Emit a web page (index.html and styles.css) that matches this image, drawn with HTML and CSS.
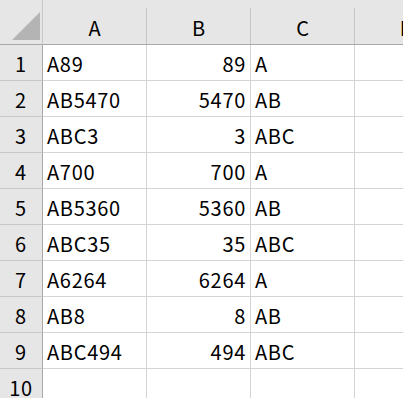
FILE: index.html
```html
<!DOCTYPE html>
<html lang="ja">
<head>
<meta charset="utf-8">
<link rel="stylesheet" href="styles.css">
</head>
<body>
<div class="sheet">
  <div class="corner"><svg class="tri" width="30" height="30" viewBox="0 0 30 30"><polygon points="29,1 29,29 1,29" fill="#b4b4b4"/></svg></div>
  <div class="colhead">A</div>
  <div class="colhead">B</div>
  <div class="colhead">C</div>
  <div class="colhead">D</div>

  <div class="rowhead">1</div><div class="cell">A89</div><div class="cell num">89</div><div class="cell">A</div><div class="cell"></div>
  <div class="rowhead">2</div><div class="cell">AB5470</div><div class="cell num">5470</div><div class="cell">AB</div><div class="cell"></div>
  <div class="rowhead">3</div><div class="cell">ABC3</div><div class="cell num">3</div><div class="cell">ABC</div><div class="cell"></div>
  <div class="rowhead">4</div><div class="cell">A700</div><div class="cell num">700</div><div class="cell">A</div><div class="cell"></div>
  <div class="rowhead">5</div><div class="cell">AB5360</div><div class="cell num">5360</div><div class="cell">AB</div><div class="cell"></div>
  <div class="rowhead">6</div><div class="cell">ABC35</div><div class="cell num">35</div><div class="cell">ABC</div><div class="cell"></div>
  <div class="rowhead">7</div><div class="cell">A6264</div><div class="cell num">6264</div><div class="cell">A</div><div class="cell"></div>
  <div class="rowhead">8</div><div class="cell">AB8</div><div class="cell num">8</div><div class="cell">AB</div><div class="cell"></div>
  <div class="rowhead">9</div><div class="cell">ABC494</div><div class="cell num">494</div><div class="cell">ABC</div><div class="cell"></div>
  <div class="rowhead">10</div><div class="cell"></div><div class="cell"></div><div class="cell"></div><div class="cell"></div>
</div>
</body>
</html>
```
FILE: styles.css
```css
html, body {
  margin: 0;
  padding: 0;
  background: #ffffff;
  overflow: hidden;
}
.sheet {
  display: grid;
  grid-template-columns: 43px 104px 104px 104px 104px;
  grid-template-rows: 45px repeat(10, 36px);
  width: 459px;
  font-family: "Noto Sans CJK JP", "Noto Sans", sans-serif;
  font-size: 20px;
  letter-spacing: 0.7px;
  color: #000;
}
.sheet > div {
  box-sizing: border-box;
  white-space: nowrap;
  overflow: hidden;
}
.corner {
  background: #e6e6e6;
  border-right: 1px solid #c8c8c8;
  border-bottom: 1px solid #a8a8a8;
  display: flex;
  align-items: flex-end;
  justify-content: flex-end;
  padding: 0 1px 3px 0;
}
.tri { display: block; }
.colhead {
  background-color: #e6e6e6;
  background-image: linear-gradient(#c6c6c6, #c6c6c6);
  background-repeat: no-repeat;
  background-position: right bottom;
  background-size: 1px calc(100% - 8px);
  border-bottom: 1px solid #a8a8a8;
  display: flex;
  align-items: center;
  justify-content: center;
  padding-top: 11px;
}
.rowhead {
  background: #e6e6e6;
  border-right: 1px solid #a8a8a8;
  border-bottom: 1px solid #c8c8c8;
  display: flex;
  align-items: center;
  justify-content: center;
  padding-top: 2px;
}
.cell {
  border-right: 1px solid #d4d4d4;
  border-bottom: 1px solid #d4d4d4;
  display: flex;
  align-items: center;
  padding: 2px 4px 0 4px;
}
.num {
  justify-content: flex-end;
  padding-right: 4px;
}
```
